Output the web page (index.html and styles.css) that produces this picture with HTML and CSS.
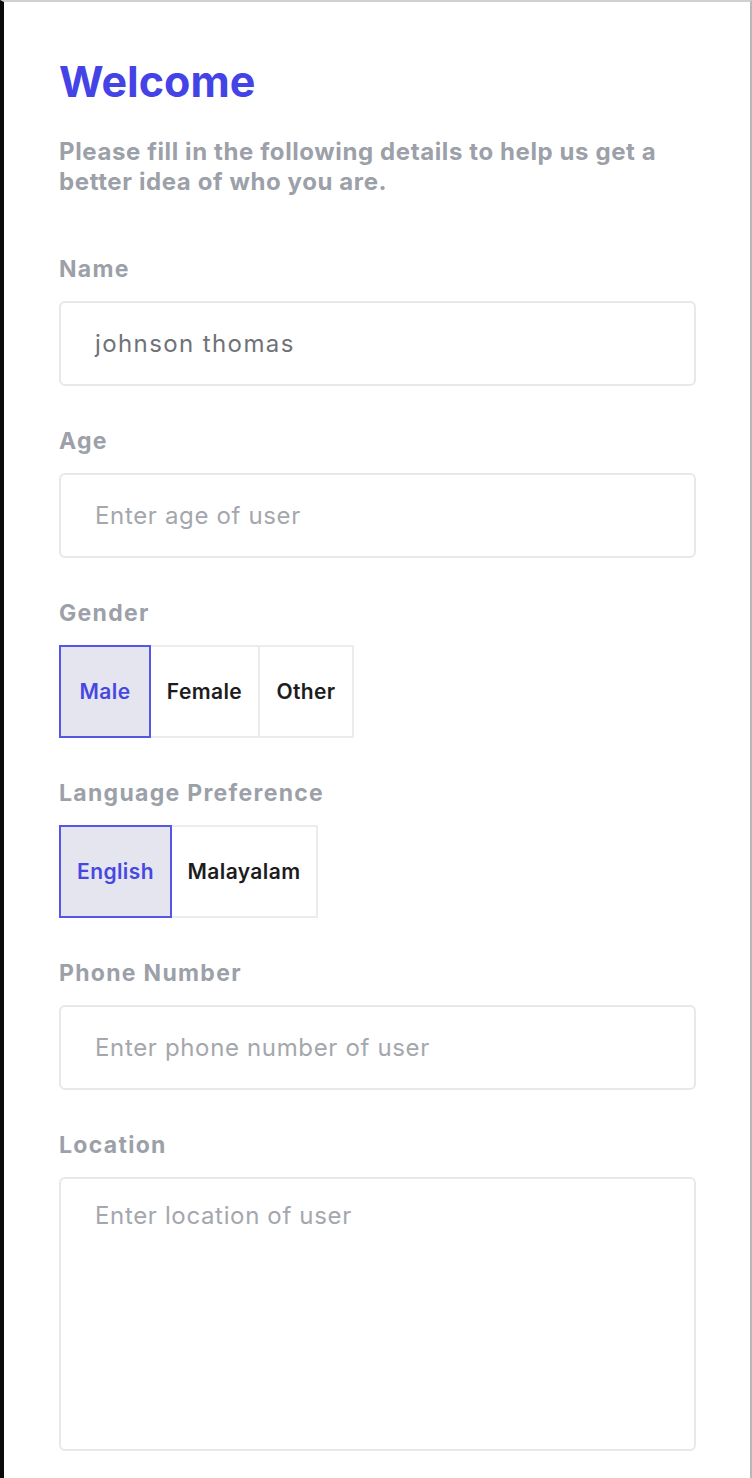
FILE: index.html
```html
<!DOCTYPE html>
<html lang="en">
<head>
<meta charset="utf-8">
<title>Welcome</title>
<link rel="stylesheet" href="styles.css">
</head>
<body>
<div class="frame">
  <main class="form">
    <h1 class="title">Welcome</h1>
    <p class="subtitle">Please fill in the following details to help us get a better idea of who you are.</p>

    <div class="field">
      <label class="label">Name</label>
      <div class="input value">johnson thomas</div>
    </div>

    <div class="field">
      <label class="label">Age</label>
      <div class="input placeholder">Enter age of user</div>
    </div>

    <div class="field">
      <label class="label">Gender</label>
      <div class="segments">
        <div class="seg seg-male active">Male</div>
        <div class="seg seg-female">Female</div>
        <div class="seg seg-other">Other</div>
      </div>
    </div>

    <div class="field">
      <label class="label">Language Preference</label>
      <div class="segments">
        <div class="seg seg-english active">English</div>
        <div class="seg seg-malayalam">Malayalam</div>
      </div>
    </div>

    <div class="field">
      <label class="label">Phone Number</label>
      <div class="input placeholder">Enter phone number of user</div>
    </div>

    <div class="field">
      <label class="label">Location</label>
      <div class="input textarea placeholder">Enter location of user</div>
    </div>
  </main>
</div>
</body>
</html>
```
FILE: styles.css
```css
html, body {
  margin: 0;
  padding: 0;
  background: #ffffff;
}
body {
  font-family: "Inter", "Liberation Sans", sans-serif;
}
.frame {
  box-sizing: border-box;
  width: 752px;
  height: 1478px;
  border-left: 4px solid #0a0a0a;
  border-top: 2px solid #d0d0d0;
  border-right: 2px solid #b8b8b8;
  overflow: hidden;
}
.form {
  padding: 53px 54px 0 55px;
  display: flex;
  flex-direction: column;
}
.title {
  margin: 0;
  font-size: 43px;
  line-height: 52px;
  font-weight: 700;
  color: #4343e6;
  letter-spacing: 0;
}
.subtitle {
  margin: 30px 0 0 0;
  font-size: 24px;
  line-height: 30px;
  font-weight: 700;
  color: #9ca0a8;
  letter-spacing: 0.6px;
  max-width: 630px;
}
.field {
  display: flex;
  flex-direction: column;
  gap: 20px;
}
.subtitle + .field {
  margin-top: 60px;
}
.field + .field {
  margin-top: 43px;
}
.label {
  font-size: 23px;
  line-height: 24px;
  font-weight: 700;
  color: #9ca0a8;
  letter-spacing: 1.3px;
}
.input {
  box-sizing: border-box;
  height: 85px;
  border: 2px solid #e8e8ec;
  border-radius: 6px;
  padding: 0 34px;
  display: flex;
  align-items: center;
  font-size: 24px;
  font-weight: 400;
  letter-spacing: 0.65px;
}
.value {
  color: #707277;
  letter-spacing: 1.4px;
}
.placeholder {
  color: #a4a7ad;
}
.textarea {
  height: 274px;
  align-items: flex-start;
  padding-top: 22px;
}
.segments {
  display: flex;
  height: 93px;
}
.seg {
  box-sizing: border-box;
  display: flex;
  align-items: center;
  justify-content: center;
  border: 2px solid #ececee;
  font-size: 21px;
  font-weight: 600;
  color: #1c1c1e;
  letter-spacing: 0.4px;
}
.seg + .seg {
  margin-left: -2px;
}
.seg.active {
  background: #e4e5ef;
  border-color: #5555e6;
  color: #4848e0;
  position: relative;
  z-index: 1;
}
.seg-male { width: 92px; }
.seg-female { width: 111px; }
.seg-other { width: 96px; }
.seg-english { width: 113px; }
.seg-malayalam { width: 148px; }
```
